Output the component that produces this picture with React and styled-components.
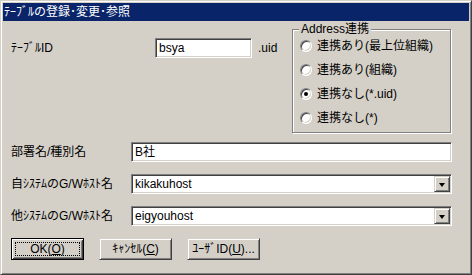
import React, { useState } from "react";
import styled, { createGlobalStyle, css } from "styled-components";

const Global = createGlobalStyle`
  html, body {
    margin: 0;
    padding: 0;
    background: #d4d0c8;
  }
  body {
    font-family: "Liberation Sans", "Noto Sans CJK JP", sans-serif;
    font-size: 12px;
    color: #000;
  }
`;

const sunken = css`
  border: 1px solid;
  border-color: #808080 #ffffff #ffffff #808080;
  box-shadow: inset 1px 1px 0 #404040, inset -1px -1px 0 #d4d0c8;
`;

const raised = css`
  border: 1px solid;
  border-color: #d4d0c8 #404040 #404040 #d4d0c8;
  box-shadow: inset 1px 1px 0 #ffffff, inset -1px -1px 0 #808080;
`;

const Window = styled.div`
  box-sizing: border-box;
  width: 472px;
  height: 275px;
  padding: 2px;
  border: 1px solid;
  border-color: #d4d0c8 #404040 #404040 #d4d0c8;
  box-shadow: inset 1px 1px 0 #ffffff, inset -1px -1px 0 #808080;
  background: #d4d0c8;
  display: flex;
  flex-direction: column;
`;

const TitleBar = styled.div`
  height: 18px;
  background: #0a246a;
  color: #fff;
  display: flex;
  align-items: center;
  padding-left: 1px;
  font-size: 12px;
  line-height: 18px;
  white-space: nowrap;
`;

const Body = styled.div`
  flex: 1;
  display: flex;
  flex-direction: column;
  padding: 0 17px 0 8px;
`;

const TopSection = styled.div`
  display: flex;
  align-items: flex-start;
  margin-top: 8px;
`;

const IdRow = styled.div`
  display: flex;
  align-items: center;
  margin-top: 9px;
`;

const Label = styled.div`
  width: ${({ $w }) => $w}px;
  flex-shrink: 0;
  white-space: nowrap;
  line-height: 14px;
`;

const Field = styled.div`
  ${sunken};
  box-sizing: border-box;
  height: ${({ $h }) => $h || 20}px;
  width: ${({ $w }) => ($w ? `${$w}px` : "auto")};
  flex: ${({ $w }) => ($w ? "none" : "1")};
  background: #fff;
  display: flex;
  align-items: center;
  padding-left: 3px;
  line-height: 14px;
  white-space: nowrap;
`;

const Suffix = styled.span`
  margin-left: 6px;
  line-height: 14px;
`;

const GroupBox = styled.div`
  position: relative;
  box-sizing: border-box;
  width: 159px;
  height: 104px;
  margin-left: auto;
  margin-right: 1px;
  border: 1px solid #808080;
  box-shadow: inset 1px 1px 0 #fff, 1px 1px 0 #fff;
  padding: 4px 0 0 7px;
  display: flex;
  flex-direction: column;
`;

const GroupTitle = styled.span`
  position: absolute;
  top: -8px;
  left: 6px;
  padding: 0 2px;
  background: #d4d0c8;
  line-height: 14px;
  white-space: nowrap;
`;

const RadioRow = styled.label`
  height: 24px;
  display: flex;
  align-items: center;
  gap: 5px;
  line-height: 14px;
  white-space: nowrap;
  cursor: default;
`;

const RadioDot = styled.span`
  box-sizing: border-box;
  width: 12px;
  height: 12px;
  border-radius: 50%;
  border: 1px solid;
  border-color: #808080 #ffffff #ffffff #808080;
  background: #fff;
  box-shadow: inset 1px 1px 0 #404040, inset -1px -1px 0 #d4d0c8;
  display: flex;
  align-items: center;
  justify-content: center;
  flex-shrink: 0;
  &::after {
    content: "";
    width: 4px;
    height: 4px;
    border-radius: 50%;
    background: ${({ $on }) => ($on ? "#000" : "transparent")};
  }
`;

const Rows = styled.div`
  display: flex;
  flex-direction: column;
  gap: 12px;
  margin-top: 9px;
`;

const Row = styled.div`
  display: flex;
  align-items: center;
`;

const DropButton = styled.span`
  ${raised};
  box-sizing: border-box;
  width: 16px;
  height: 16px;
  margin-left: auto;
  margin-right: 1px;
  background: #d4d0c8;
  display: flex;
  align-items: center;
  justify-content: center;
  &::after {
    content: "";
    width: 0;
    height: 0;
    border-left: 3.5px solid transparent;
    border-right: 3.5px solid transparent;
    border-top: 4px solid #000;
    margin-top: 1px;
  }
`;

const Buttons = styled.div`
  display: flex;
  gap: 15px;
  margin-top: 12px;
`;

const Button = styled.button`
  ${raised};
  position: relative;
  box-sizing: border-box;
  width: 73px;
  height: 22px;
  padding: 0;
  background: #d4d0c8;
  font-family: inherit;
  font-size: 12px;
  line-height: 14px;
  color: #000;
  white-space: nowrap;
  ${({ $default }) =>
    $default &&
    css`
      border: 1px solid #000;
      box-shadow: inset 1px 1px 0 #ffffff, inset -1px -1px 0 #404040,
        inset 2px 2px 0 #d4d0c8, inset -2px -2px 0 #808080;
      &::after {
        content: "";
        position: absolute;
        inset: 3px;
        border: 1px dotted #000;
      }
    `}
`;

const Key = styled.u`
  text-decoration: underline;
  text-underline-offset: 1px;
`;

const radios = [
  "連携あり(最上位組織)",
  "連携あり(組織)",
  "連携なし(*.uid)",
  "連携なし(*)",
];

const App = () => {
  const [mode, setMode] = useState(2);

  return (
    <>
      <Global />
      <Window>
        <TitleBar>ﾃｰﾌﾞﾙの登録･変更･参照</TitleBar>
        <Body>
          <TopSection>
            <IdRow>
              <Label $w={144}>ﾃｰﾌﾞﾙID</Label>
              <Field $w={97} $h={20}>bsya</Field>
              <Suffix>.uid</Suffix>
            </IdRow>
            <GroupBox>
              <GroupTitle>Address連携</GroupTitle>
              {radios.map((text, i) => (
                <RadioRow key={text} onClick={() => setMode(i)}>
                  <RadioDot $on={mode === i} />
                  {text}
                </RadioRow>
              ))}
            </GroupBox>
          </TopSection>
          <Rows>
            <Row>
              <Label $w={120}>部署名/種別名</Label>
              <Field>B社</Field>
            </Row>
            <Row>
              <Label $w={120}>自ｼｽﾃﾑのG/Wﾎｽﾄ名</Label>
              <Field>
                kikakuhost
                <DropButton />
              </Field>
            </Row>
            <Row>
              <Label $w={120}>他ｼｽﾃﾑのG/Wﾎｽﾄ名</Label>
              <Field>
                eigyouhost
                <DropButton />
              </Field>
            </Row>
          </Rows>
          <Buttons>
            <Button $default>
              OK(<Key>O</Key>)
            </Button>
            <Button>
              ｷｬﾝｾﾙ(<Key>C</Key>)
            </Button>
            <Button>
              ﾕｰｻﾞID(<Key>U</Key>)...
            </Button>
          </Buttons>
        </Body>
      </Window>
    </>
  );
};

export default App;
